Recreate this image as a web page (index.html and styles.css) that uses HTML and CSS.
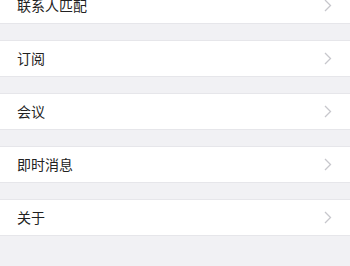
FILE: index.html
```html
<!DOCTYPE html>
<html lang="zh">
<head>
<meta charset="utf-8">
<link rel="stylesheet" href="styles.css">
</head>
<body>
<div class="list">
  <div class="row"><span class="label">联系人匹配</span><svg class="chev" width="8" height="13" viewBox="0 0 8 13"><path d="M1 1 L6.5 6.5 L1 12" fill="none" stroke="#c7c7cc" stroke-width="1.3"/></svg></div>
  <div class="row"><span class="label">订阅</span><svg class="chev" width="8" height="13" viewBox="0 0 8 13"><path d="M1 1 L6.5 6.5 L1 12" fill="none" stroke="#c7c7cc" stroke-width="1.3"/></svg></div>
  <div class="row"><span class="label">会议</span><svg class="chev" width="8" height="13" viewBox="0 0 8 13"><path d="M1 1 L6.5 6.5 L1 12" fill="none" stroke="#c7c7cc" stroke-width="1.3"/></svg></div>
  <div class="row"><span class="label">即时消息</span><svg class="chev" width="8" height="13" viewBox="0 0 8 13"><path d="M1 1 L6.5 6.5 L1 12" fill="none" stroke="#c7c7cc" stroke-width="1.3"/></svg></div>
  <div class="row"><span class="label">关于</span><svg class="chev" width="8" height="13" viewBox="0 0 8 13"><path d="M1 1 L6.5 6.5 L1 12" fill="none" stroke="#c7c7cc" stroke-width="1.3"/></svg></div>
</div>
</body>
</html>
```
FILE: styles.css
```css
html, body {
  margin: 0;
  padding: 0;
  background: #f1f1f4;
  height: 100%;
  overflow: hidden;
}
.list {
  display: flex;
  flex-direction: column;
  gap: 16px;
  margin-top: -13px;
}
.row {
  height: 35px;
  box-sizing: content-box;
  background: #fff;
  border-top: 1px solid #e6e6ea;
  border-bottom: 1px solid #e6e6ea;
  display: flex;
  align-items: center;
  justify-content: space-between;
  padding: 0 18px 0 17px;
}
.label {
  font-family: "Noto Sans CJK SC", sans-serif;
  font-size: 14px;
  line-height: 20px;
  color: #222;
  margin-bottom: 2px;
}
.chev {
  display: block;
}
```
